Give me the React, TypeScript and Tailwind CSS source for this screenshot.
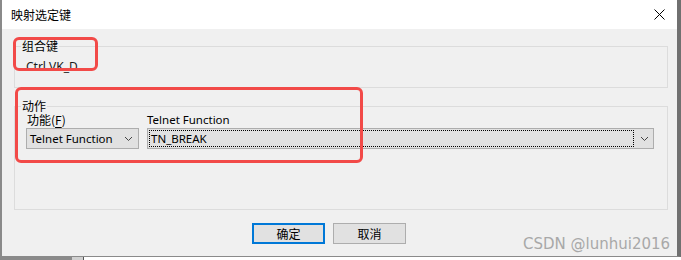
import React from "react";

const ui = { fontFamily: '"Segoe UI", "Noto Sans", "Noto Sans CJK SC", sans-serif' };
const cjk = { fontFamily: '"Noto Sans CJK SC", "Noto Sans", sans-serif' };

function Chevron() {
  return (
    <svg width="9" height="6" viewBox="0 0 9 6" className="shrink-0">
      <path d="M1 1 L4.5 4.5 L8 1" fill="none" stroke="#444" strokeWidth="1" />
    </svg>
  );
}

export default function App() {
  return (
    <div className="relative w-[681px] h-[260px] overflow-hidden bg-[#ffffff] flex flex-col">
      <div className="flex flex-col h-[257px] border-l-2 border-r-4 border-l-[#8a8a8a] border-r-[#707070] border-b border-b-[#8a8a8a]">
        {/* title bar */}
        <div className="h-[29px] bg-white flex items-center justify-between pl-[9px] pr-[12px] shrink-0">
          <span className="text-[12px] leading-[14px] text-black" style={cjk}>映射选定键</span>
          <svg width="11" height="11" viewBox="0 0 11 11">
            <path d="M0.5 0.5 L10.5 10.5 M10.5 0.5 L0.5 10.5" stroke="#000" strokeWidth="1" />
          </svg>
        </div>
        {/* body */}
        <div className="flex-1 bg-[#f0f0f0] pt-[17px] pl-[12px] pr-[9px] flex flex-col" style={ui}>
          {/* group 1 */}
          <div className="h-[42px] border border-[#dcdcdc] flex flex-col">
            <div className="-mt-[8px] ml-[6px] px-[1px] w-fit bg-[#f0f0f0] text-[12px] leading-[14px] text-black" style={cjk}>组合键</div>
            <div className="mt-[8px] ml-[11px] text-[12px] leading-[12px] text-[#1a1a1a]">Ctrl VK_D</div>
          </div>
          {/* group 2 */}
          <div className="mt-[18px] h-[104px] border border-[#dcdcdc] flex flex-col">
            <div className="-mt-[8px] ml-[6px] px-[1px] w-fit bg-[#f0f0f0] text-[12px] leading-[13px] text-black" style={cjk}>动作</div>
            <div className="flex gap-[8px] pl-[11px] mt-[1px]">
              <div className="flex flex-col w-[113px]">
                <div className="pl-[1px] text-[12px] leading-[14px] text-black" style={cjk}>
                  功能(<span className="underline underline-offset-2">F</span>)
                </div>
                <div className="mt-[1px] h-[21px] bg-[#e1e1e1] border border-[#adadad] flex items-center justify-between pl-[3px] pr-[5px]">
                  <span className="text-[11.5px] leading-[14px] text-black">Telnet Function</span>
                  <Chevron />
                </div>
              </div>
              <div className="flex flex-col w-[507px]">
                <div className="text-[11.5px] leading-[14px] text-black">Telnet Function</div>
                <div className="mt-[1px] h-[21px] bg-[#e1e1e1] border border-[#adadad] flex items-center pl-[1px] pr-[4px] gap-[6px]">
                  <div className="flex-1 h-[17px] border border-dotted border-black flex items-center pl-[1px]">
                    <span className="text-[11.5px] leading-[14px] text-black">TN_BREAK</span>
                  </div>
                  <Chevron />
                </div>
              </div>
            </div>
          </div>
          {/* buttons */}
          <div className="mt-[13px] flex gap-[8px] ml-[238px]">
            <div className="w-[73px] h-[21px] bg-[#e1e1e1] border-2 border-[#0078d7] flex items-center justify-center text-[12px] text-black" style={cjk}>确定</div>
            <div className="w-[73px] h-[21px] bg-[#e1e1e1] border border-[#adadad] flex items-center justify-center text-[12px] text-black" style={cjk}>取消</div>
          </div>
        </div>
      </div>
      {/* strip of background window */}
      <div className="flex h-[3px]">
        <div className="w-[72px] bg-[#8a8a8a]" />
        <div className="w-[11px] bg-[#d0d0d0]" />
        <div className="w-[1px] bg-[#555]" />
        <div className="flex-1 bg-white" />
      </div>
      {/* overlays */}
      <div className="absolute left-[13px] top-[37px] w-[85px] h-[34px] border-[3px] border-[#f24a48] rounded-[6px]" />
      <div className="absolute left-[15px] top-[87px] w-[348px] h-[76px] border-[3px] border-[#f24a48] rounded-[6px]" />
      <div className="absolute left-[523px] top-[235px] text-[15px] leading-[18px] text-[#a8a8a8]" style={{ fontFamily: '"DejaVu Sans", sans-serif' }}>CSDN @lunhui2016</div>
    </div>
  );
}
